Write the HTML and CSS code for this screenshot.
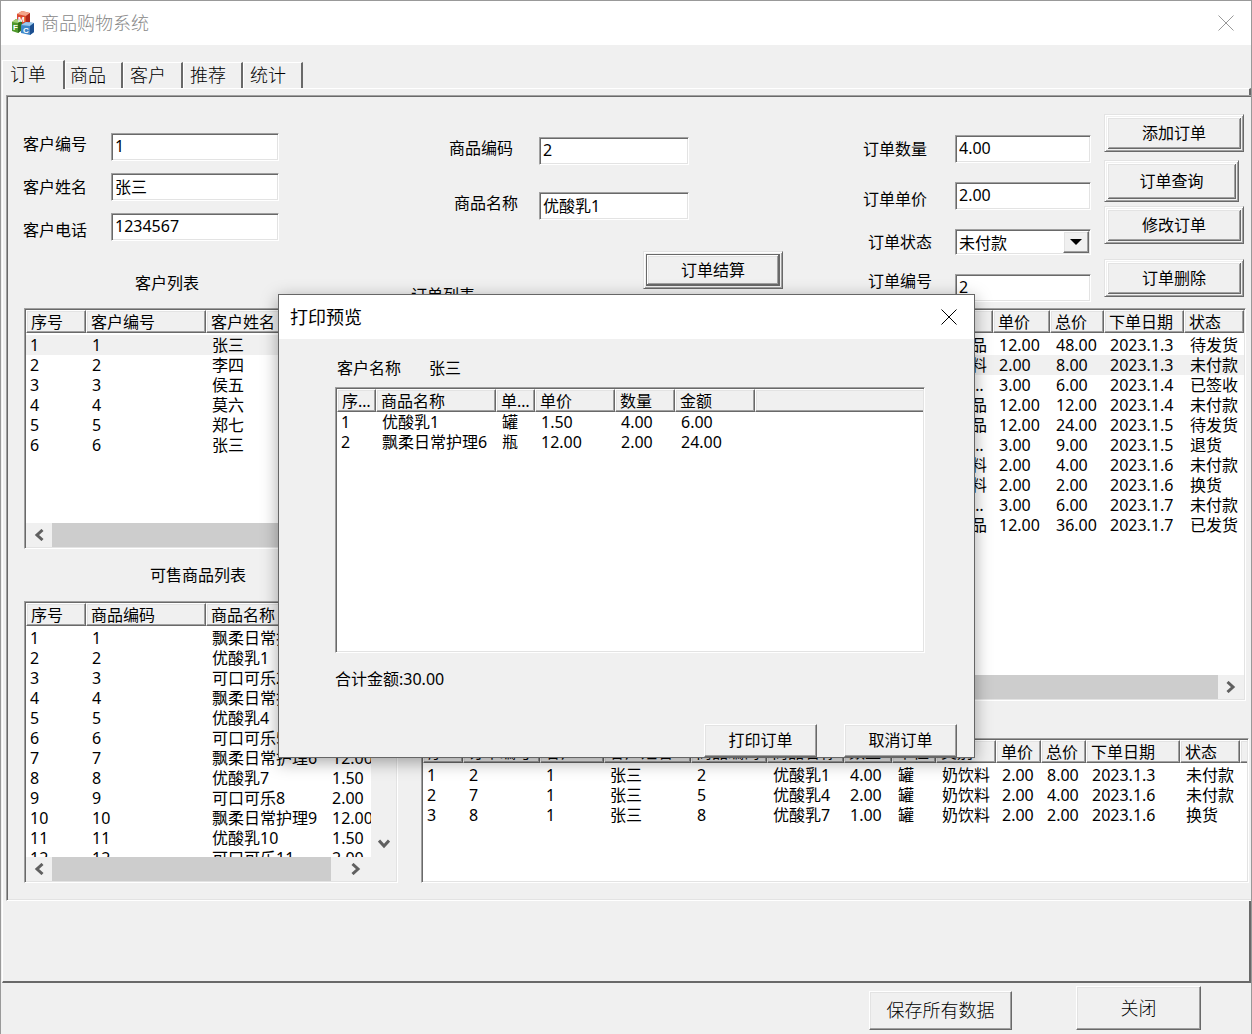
FILE: index.html
```html
<!DOCTYPE html>
<html lang="zh-CN">
<head>
<meta charset="utf-8">
<title>商品购物系统</title>
<link rel="stylesheet" href="styles.css">
</head>
<body>
<div class="window">
  <header class="titlebar">
    <svg class="logo" width="24" height="26" viewBox="0 0 24 26" aria-hidden="true">
      <path d="M6 4l5-3 8 2v8l-5 4-8-2z" fill="#dc4a2e"/>
      <path d="M6 4l5-3 8 2-4 3z" fill="#f3a58a"/>
      <path d="M15 6l4-3v9l-4 3z" fill="#b02a1c"/>
      <path d="M1 12l4-3 6 2v9l-4 3-6-2z" fill="#4f9a2c"/>
      <path d="M1 12l4-3 6 2-4 2z" fill="#a5cf78"/>
      <path d="M7 13l4-2v9l-4 3z" fill="#2f6d1c"/>
      <path d="M10 15l5-3 8 1v9l-4 3-9-2z" fill="#3f86c8"/>
      <path d="M10 15l5-3 8 1-4 3z" fill="#9cc8ec"/>
      <path d="M19 16l4-3v9l-4 3z" fill="#1d4f8f"/>
      <text x="7" y="12" class="logo-letter">M</text>
      <text x="2" y="20" class="logo-letter">F</text>
      <text x="12" y="23" class="logo-letter">C</text>
    </svg>
    <h1 class="title">商品购物系统</h1>
    <button class="close close--idle" type="button" aria-label="关闭窗口">
      <svg width="16" height="16" viewBox="0 0 16 16"><path d="M.5.5l15 15M15.5.5l-15 15" stroke="currentColor" fill="none"/></svg>
    </button>
  </header>

  <nav class="tabs" role="tablist">
    <button class="tab tab--active" role="tab" type="button" aria-selected="true">订单</button>
    <button class="tab" role="tab" type="button">商品</button>
    <button class="tab" role="tab" type="button">客户</button>
    <button class="tab" role="tab" type="button">推荐</button>
    <button class="tab" role="tab" type="button">统计</button>
  </nav>

  <div class="frame">
    <main class="page">
      <form class="form">
        <section class="group group--client">
          <div class="field"><label class="label label--top" for="cid">客户编号</label><input class="input" id="cid" value="1"></div>
          <div class="field"><label class="label" for="cname">客户姓名</label><input class="input" id="cname" value="张三"></div>
          <div class="field"><label class="label label--bottom" for="cphone">客户电话</label><input class="input" id="cphone" value="1234567"></div>
          <h2 class="caption caption--client">客户列表</h2>
        </section>
        <section class="group group--goods">
          <div class="field"><label class="label label--top" for="gid">商品编码</label><input class="input" id="gid" value="2"></div>
          <div class="field field--near"><label class="label label--top" for="gname">商品名称</label><input class="input" id="gname" value="优酸乳1"></div>
          <div class="settle">
            <h2 class="caption caption--orders">订单列表</h2>
            <button class="button button--ridge button--default" type="button">订单结算</button>
          </div>
        </section>
        <section class="group group--order">
          <div class="field"><label class="label" for="qty">订单数量</label><input class="input" id="qty" value="4.00"></div>
          <div class="field"><label class="label label--bottom" for="price">订单单价</label><input class="input" id="price" value="2.00"></div>
          <div class="field field--indent"><label class="label" for="state">订单状态</label>
            <span class="combo"><select class="combo-select" id="state"><option>未付款</option><option>待发货</option><option>已发货</option><option>已签收</option></select><span class="combo-arrow"><svg width="12" height="6" viewBox="0 0 12 6"><path d="M0 0h12L6 6z" fill="#000"/></svg></span></span>
          </div>
          <div class="field field--indent"><label class="label label--raised" for="oid">订单编号</label><input class="input" id="oid" value="2"></div>
        </section>
        <section class="actions">
          <button class="button button--ridge" type="button">添加订单</button>
          <button class="button button--ridge button--query" type="button">订单查询</button>
          <button class="button button--ridge" type="button">修改订单</button>
          <button class="button button--ridge button--delete" type="button">订单删除</button>
        </section>
      </form>

      <div class="lists">
        <div class="column">
          <div class="list list--clients">
            <div class="list-body">
              <table class="table table--gap">
                <colgroup><col class="col-60"><col class="col-120"><col></colgroup>
                <thead><tr><th>序号</th><th>客户编号</th><th>客户姓名</th></tr></thead>
                <tbody>
                  <tr class="selected"><td>1</td><td>1</td><td>张三</td></tr>
                  <tr><td>2</td><td>2</td><td>李四</td></tr>
                  <tr><td>3</td><td>3</td><td>侯五</td></tr>
                  <tr><td>4</td><td>4</td><td>莫六</td></tr>
                  <tr><td>5</td><td>5</td><td>郑七</td></tr>
                  <tr><td>6</td><td>6</td><td>张三</td></tr>
                </tbody>
              </table>
            </div>
            <div class="scroll">
              <span class="scroll-arrow"><svg width="10" height="12" viewBox="0 0 10 12"><path d="M8.500 1L3 6l5.500 5" class="chevron"/></svg></span>
              <span class="scroll-thumb"></span>
              <span class="scroll-arrow"><svg width="10" height="12" viewBox="0 0 10 12"><path d="M1.500 1L7 6l-5.500 5" class="chevron"/></svg></span>
            </div>
          </div>
          <h2 class="caption caption--stock">可售商品列表</h2>
          <div class="list list--stock">
            <div class="list-row">
              <div class="list-body">
                <table class="table table--gap table--wide">
                  <colgroup><col class="col-60"><col class="col-120"><col class="col-120"><col></colgroup>
                  <thead><tr><th>序号</th><th>商品编码</th><th>商品名称</th><th>单价</th></tr></thead>
                  <tbody>
                    <tr><td>1</td><td>1</td><td>飘柔日常护理0</td><td>12.00</td></tr>
                    <tr><td>2</td><td>2</td><td>优酸乳1</td><td>1.50</td></tr>
                    <tr><td>3</td><td>3</td><td>可口可乐2</td><td>2.00</td></tr>
                    <tr><td>4</td><td>4</td><td>飘柔日常护理3</td><td>12.00</td></tr>
                    <tr><td>5</td><td>5</td><td>优酸乳4</td><td>1.50</td></tr>
                    <tr><td>6</td><td>6</td><td>可口可乐5</td><td>2.00</td></tr>
                    <tr><td>7</td><td>7</td><td>飘柔日常护理6</td><td>12.00</td></tr>
                    <tr><td>8</td><td>8</td><td>优酸乳7</td><td>1.50</td></tr>
                    <tr><td>9</td><td>9</td><td>可口可乐8</td><td>2.00</td></tr>
                    <tr><td>10</td><td>10</td><td>飘柔日常护理9</td><td>12.00</td></tr>
                    <tr><td>11</td><td>11</td><td>优酸乳10</td><td>1.50</td></tr>
                    <tr><td>12</td><td>12</td><td>可口可乐11</td><td>2.00</td></tr>
                  </tbody>
                </table>
              </div>
              <div class="vscroll"><svg width="12" height="10" viewBox="0 0 12 10"><path d="M1 1.500L6 7l5-5.500" class="chevron"/></svg></div>
            </div>
            <div class="scroll scroll--corner">
              <span class="scroll-arrow"><svg width="10" height="12" viewBox="0 0 10 12"><path d="M8.500 1L3 6l5.500 5" class="chevron"/></svg></span>
              <span class="scroll-thumb scroll-thumb--short"></span>
              <span class="scroll-arrow"><svg width="10" height="12" viewBox="0 0 10 12"><path d="M1.500 1L7 6l-5.500 5" class="chevron"/></svg></span>
            </div>
          </div>
        </div>

        <div class="column">
          <div class="list list--orders">
            <div class="list-body">
              <table class="table table--gap">
                <colgroup><col class="col-50"><col class="col-110"><col class="col-110"><col class="col-160"><col class="col-80"><col class="col-60"><col class="col-57"><col class="col-54"><col class="col-80"><col></colgroup>
                <thead><tr><th>序号</th><th>订单编号</th><th>商品编码</th><th>商品名称</th><th>数量</th><th>类别</th><th>单价</th><th>总价</th><th>下单日期</th><th>状态</th></tr></thead>
                <tbody>
                  <tr><td>1</td><td>1</td><td>1</td><td>飘柔日常护理0</td><td>4.00</td><td>日用品</td><td>12.00</td><td>48.00</td><td>2023.1.3</td><td>待发货</td></tr>
                  <tr class="selected"><td>2</td><td>2</td><td>2</td><td>优酸乳1</td><td>4.00</td><td>奶饮料</td><td>2.00</td><td>8.00</td><td>2023.1.3</td><td>未付款</td></tr>
                  <tr><td>3</td><td>3</td><td>3</td><td>可口可乐2</td><td>2.00</td><td>碳酸饮料</td><td>3.00</td><td>6.00</td><td>2023.1.4</td><td>已签收</td></tr>
                  <tr><td>4</td><td>4</td><td>4</td><td>飘柔日常护理3</td><td>1.00</td><td>日用品</td><td>12.00</td><td>12.00</td><td>2023.1.4</td><td>未付款</td></tr>
                  <tr><td>5</td><td>5</td><td>4</td><td>飘柔日常护理3</td><td>2.00</td><td>日用品</td><td>12.00</td><td>24.00</td><td>2023.1.5</td><td>待发货</td></tr>
                  <tr><td>6</td><td>6</td><td>6</td><td>可口可乐5</td><td>3.00</td><td>碳酸饮料</td><td>3.00</td><td>9.00</td><td>2023.1.5</td><td>退货</td></tr>
                  <tr><td>7</td><td>7</td><td>5</td><td>优酸乳4</td><td>2.00</td><td>奶饮料</td><td>2.00</td><td>4.00</td><td>2023.1.6</td><td>未付款</td></tr>
                  <tr><td>8</td><td>8</td><td>8</td><td>优酸乳7</td><td>1.00</td><td>奶饮料</td><td>2.00</td><td>2.00</td><td>2023.1.6</td><td>换货</td></tr>
                  <tr><td>9</td><td>9</td><td>9</td><td>可口可乐8</td><td>2.00</td><td>碳酸饮料</td><td>3.00</td><td>6.00</td><td>2023.1.7</td><td>未付款</td></tr>
                  <tr><td>10</td><td>10</td><td>10</td><td>飘柔日常护理9</td><td>3.00</td><td>日用品</td><td>12.00</td><td>36.00</td><td>2023.1.7</td><td>已发货</td></tr>
                </tbody>
              </table>
            </div>
            <div class="scroll">
              <span class="scroll-arrow"><svg width="10" height="12" viewBox="0 0 10 12"><path d="M8.500 1L3 6l5.500 5" class="chevron"/></svg></span>
              <span class="scroll-thumb"></span>
              <span class="scroll-arrow"><svg width="10" height="12" viewBox="0 0 10 12"><path d="M1.500 1L7 6l-5.500 5" class="chevron"/></svg></span>
            </div>
          </div>
          <div class="list list--result">
            <div class="list-body">
              <table class="table table--gap">
                <colgroup><col class="col-40"><col class="col-77"><col class="col-64"><col class="col-87"><col class="col-76"><col class="col-77"><col class="col-48"><col class="col-44"><col class="col-60"><col class="col-45"><col class="col-45"><col class="col-94"><col class="col-60"><col></colgroup>
                <thead><tr><th>序号</th><th>订单编号</th><th>客户编号</th><th>客户姓名</th><th>商品编码</th><th>商品名称</th><th>数量</th><th>单位</th><th>类别</th><th>单价</th><th>总价</th><th>下单日期</th><th>状态</th><th class="rest"></th></tr></thead>
                <tbody>
                  <tr><td>1</td><td>2</td><td>1</td><td>张三</td><td>2</td><td>优酸乳1</td><td>4.00</td><td>罐</td><td>奶饮料</td><td>2.00</td><td>8.00</td><td>2023.1.3</td><td>未付款</td><td></td></tr>
                  <tr><td>2</td><td>7</td><td>1</td><td>张三</td><td>5</td><td>优酸乳4</td><td>2.00</td><td>罐</td><td>奶饮料</td><td>2.00</td><td>4.00</td><td>2023.1.6</td><td>未付款</td><td></td></tr>
                  <tr><td>3</td><td>8</td><td>1</td><td>张三</td><td>8</td><td>优酸乳7</td><td>1.00</td><td>罐</td><td>奶饮料</td><td>2.00</td><td>2.00</td><td>2023.1.6</td><td>换货</td><td></td></tr>
                </tbody>
              </table>
            </div>
          </div>
        </div>
      </div>
    </main>
  </div>

  <footer class="footer">
    <button class="button button--save" type="button">保存所有数据</button>
    <button class="button button--exit" type="button">关闭</button>
  </footer>

  <div class="dialog" role="dialog" aria-labelledby="dialog-title">
    <div class="dialog-bar">
      <h2 class="dialog-title" id="dialog-title">打印预览</h2>
      <button class="close" type="button" aria-label="关闭预览">
        <svg width="16" height="16" viewBox="0 0 16 16"><path d="M.5.5l15 15M15.5.5l-15 15" stroke="currentColor" fill="none"/></svg>
      </button>
    </div>
    <div class="dialog-body">
      <p class="customer"><span>客户名称</span><span>张三</span></p>
      <div class="list list--preview">
        <div class="list-body">
          <table class="table">
            <colgroup><col class="col-39"><col class="col-120"><col class="col-39"><col class="col-80"><col class="col-60"><col class="col-80"><col></colgroup>
            <thead><tr><th>序号</th><th>商品名称</th><th>单位</th><th>单价</th><th>数量</th><th>金额</th><th class="rest"></th></tr></thead>
            <tbody>
              <tr><td>1</td><td>优酸乳1</td><td>罐</td><td>1.50</td><td>4.00</td><td>6.00</td><td></td></tr>
              <tr><td>2</td><td>飘柔日常护理6</td><td>瓶</td><td>12.00</td><td>2.00</td><td>24.00</td><td></td></tr>
            </tbody>
          </table>
        </div>
      </div>
      <p class="total">合计金额:30.00</p>
    </div>
    <div class="dialog-actions">
      <button class="button" type="button">打印订单</button>
      <button class="button" type="button">取消订单</button>
    </div>
  </div>
</div>
</body>
</html>
```
FILE: styles.css
```css
:root {
  --face: #f0f0f0;
  --light: #e3e3e3;
  --shade: #a0a0a0;
  --dark: #696969;
}

* { box-sizing: border-box; }

body {
  margin: 0;
  background: var(--face);
  color: #000;
  font: 16px/22px "Noto Sans", "Noto Sans CJK SC", sans-serif;
}

button, input, select { font: inherit; color: inherit; }
h1, h2, p { margin: 0; font-size: 16px; font-weight: 400; }

.window {
  position: relative;
  min-height: 100vh;
  border: 1px solid #999;
  border-bottom: 0;
}

/* Title bar */
.titlebar {
  display: flex;
  align-items: center;
  height: 44px;
  padding: 0 17px 0 10px;
  background: #fff;
}
.logo-letter { font: bold 8px "Liberation Sans", sans-serif; fill: #fff; }
.title { flex: 1; margin-left: 6px; font-size: 18px; font-weight: 300; color: #888; }
.close {
  display: flex;
  padding: 0;
  border: 0;
  background: none;
}
.close--idle { color: #999; }

/* Tabs */
.tabs {
  display: flex;
  align-items: flex-end;
  padding: 15px 0 0 1px;
}
.tab {
  width: 60px;
  height: 26px;
  padding: 0 0 1px 6px;
  border: solid;
  border-width: 1px 2px 0 1px;
  border-color: #fff var(--dark) #fff #fff;
  background: var(--face);
  font-size: 18px;
  font-weight: 300;
  text-align: left;
}
.tab--active {
  width: 63px;
  height: 29px;
  margin-bottom: -1px;
  padding: 0 0 3px 7px;
  z-index: 1;
}
.tab--active + .tab { width: 58px; padding-left: 4px; }

.frame {
  margin-left: 1px;
  padding: 6px 0 80px 3px;
  border: solid;
  border-width: 1px 2px 2px 1px;
  border-color: #fff var(--dark) var(--dark) #fff;
}
.page {
  margin-right: -2px;
  padding: 1px 0 17px 1px;
  border: solid;
  border-width: 1px 0 1px 1px;
  border-color: var(--shade) #fff #fff var(--shade);
  background: var(--face);
  box-shadow: inset 1px 1px var(--dark), inset 0 -1px var(--light);
}

/* Entry form */
.form {
  display: grid;
  grid-template-columns: minmax(0, 388fr) minmax(0, 452fr) minmax(0, 241fr) minmax(0, 140fr);
  height: 211px;
  padding: 0 7px 0 15px;
}
.group { display: flex; flex-direction: column; }
.group--client { gap: 12px; padding-top: 36px; }
.group--goods { gap: 27px; padding-top: 40px; }
.group--order { gap: 19px; padding-top: 38px; }

.field { display: flex; align-items: center; }
.label { flex: none; }
.label--top { align-self: flex-start; }
.label--bottom { align-self: flex-end; }
.label--raised { align-self: flex-start; line-height: 14px; }

.group--client .label { width: 88px; }
.group--client .input { width: 168px; }
.group--goods .field { width: 278px; justify-content: flex-end; gap: 26px; }
.group--goods .field--near { gap: 21px; }
.group--goods .input { width: 150px; }
.group--order .label { width: 92px; }
.group--order .field--indent { padding-left: 5px; }
.group--order .field--indent .label { width: 87px; }
.group--order .input, .combo { width: 136px; }

.input, .combo {
  height: 28px;
  padding: 1px;
  border: 1px solid;
  border-color: var(--shade) #fff #fff var(--shade);
  background: #fff;
  box-shadow: inset 1px 1px var(--dark), inset -1px -1px var(--light);
}
.input { padding: 0 1px 2px 3px; outline: 0; }
.combo { display: flex; height: 26px; }
.combo-select {
  flex: 1;
  min-width: 0;
  padding: 1px 0 0 2px;
  border: 0;
  background: none;
  line-height: 20px;
  appearance: none;
}
.combo-arrow {
  display: flex;
  align-items: center;
  justify-content: center;
  width: 26px;
}
.combo-arrow, .button {
  border: 1px solid;
  border-color: #fff var(--dark) var(--dark) #fff;
  background: var(--face);
  box-shadow: inset -1px -1px var(--shade), inset 1px 1px var(--light);
}

.caption--client { margin: 19px 0 0 112px; }
.caption--stock { margin: 15px 0 15px 126px; }
.caption--orders { align-self: flex-end; }
.settle {
  display: flex;
  justify-content: space-between;
  width: 372px;
  height: 55px;
  margin-top: 4px;
}

/* Buttons */
.button { padding: 0 0 1px; }
.button--ridge {
  height: 38px;
  border-color: var(--light) var(--dark) var(--dark) var(--light);
  box-shadow:
    inset 1px 1px #fff, inset -1px -1px var(--shade),
    inset 2px 2px var(--face), inset -2px -2px var(--face),
    inset 3px 3px #fff, inset -3px -3px var(--dark),
    inset 4px 4px var(--light), inset -4px -4px var(--shade);
}
.button--default {
  width: 140px;
  box-shadow:
    inset 1px 1px #fff, inset -1px -1px var(--shade),
    inset 2px 2px var(--face), inset -2px -2px var(--face),
    inset 3px 3px var(--dark), inset -4px -4px var(--dark),
    inset 4px 4px #fff, inset -5px -5px var(--shade),
    inset 5px 5px var(--light);
}
.actions {
  display: flex;
  flex-direction: column;
  gap: 4px;
  padding-top: 17px;
}
.button--query { height: 42px; margin: 4px 5px 0 0; }
.button--delete { margin-top: 11px; }

/* List views */
.lists {
  display: grid;
  grid-template-columns: 374px minmax(0, 1fr);
  gap: 23px;
  padding: 0 2px 0 16px;
}
.column { display: flex; flex-direction: column; }
.list {
  display: flex;
  flex-direction: column;
  padding: 1px;
  border: 1px solid;
  border-color: var(--shade) #fff #fff var(--shade);
  background: #fff;
  box-shadow: inset 1px 1px var(--dark), inset -1px -1px var(--light);
}
.list--clients { height: 241px; }
.list--stock { height: 282px; }
.list--orders { height: 393px; margin: 0 3px 37px 0; }
.list--result { height: 145px; }
.list--preview { height: 266px; }
.list-row { display: flex; flex: 1; min-height: 0; }
.list-body { flex: 1; min-height: 0; overflow: hidden; }

.table {
  width: 100%;
  border-spacing: 0;
  table-layout: fixed;
  line-height: 20px;
}
.table--wide { width: 380px; }
.table--gap tbody::before { content: ""; display: table-row; height: 2px; }
.table th, .table td {
  padding: 0 3px 0 6px;
  overflow: hidden;
  text-align: left;
  text-overflow: ellipsis;
  white-space: nowrap;
}
.table td { height: 20px; }
.table td:first-child { padding-left: 4px; }
.table th {
  height: 23px;
  padding-left: 4px;
  border: 1px solid;
  border-color: #fff var(--dark) var(--dark) #fff;
  background: var(--face);
  box-shadow: inset -1px -1px var(--shade), inset 1px 1px var(--light);
  font-weight: 400;
}
.table .rest {
  border-right: 0;
  box-shadow: inset 0 -1px var(--shade), inset 1px 1px var(--light);
}
.selected td { background: var(--face); }

.col-39 { width: 39px; }
.col-40 { width: 40px; }
.col-44 { width: 44px; }
.col-45 { width: 45px; }
.col-48 { width: 48px; }
.col-50 { width: 50px; }
.col-54 { width: 54px; }
.col-57 { width: 57px; }
.col-60 { width: 60px; }
.col-64 { width: 64px; }
.col-76 { width: 76px; }
.col-77 { width: 77px; }
.col-80 { width: 80px; }
.col-87 { width: 87px; }
.col-94 { width: 94px; }
.col-110 { width: 110px; }
.col-120 { width: 120px; }
.col-160 { width: 160px; }

.scroll { display: flex; height: 24px; background: var(--face); }
.scroll--corner { padding-right: 27px; }
.scroll-arrow {
  display: flex;
  align-items: center;
  justify-content: center;
  width: 26px;
}
.scroll-thumb { flex: 1; background: #cdcdcd; }
.scroll-thumb--short { margin-right: 12px; }
.vscroll {
  display: flex;
  align-items: flex-end;
  justify-content: center;
  width: 25px;
  padding-bottom: 8px;
  background: var(--face);
}
.chevron { fill: none; stroke: #606060; stroke-width: 3; }

/* Footer */
.footer {
  display: flex;
  align-items: flex-end;
  justify-content: flex-end;
  gap: 64px;
  padding: 3px 50px 4px 0;
}
.footer .button { font-size: 18px; font-weight: 300; }
.button--save { width: 143px; height: 39px; }
.button--exit { width: 125px; height: 44px; }

/* Print preview window */
.dialog {
  position: absolute;
  top: 293px;
  left: 277px;
  z-index: 2;
  width: 697px;
  border: 1px solid #666;
  background: var(--face);
  box-shadow: 0 4px 16px rgba(0, 0, 0, 0.35);
}
.dialog-bar {
  display: flex;
  align-items: center;
  justify-content: space-between;
  height: 44px;
  padding: 0 17px 0 11px;
  background: #fff;
}
.dialog-title { font-size: 18px; }
.dialog-body { padding: 18px 49px 0 56px; }
.customer { display: flex; gap: 28px; margin-bottom: 8px; padding-left: 2px; }
.total { margin-top: 15px; }
.dialog-actions {
  display: flex;
  justify-content: flex-end;
  gap: 27px;
  padding: 34px 17px 0 0;
}
.dialog-actions .button { width: 113px; height: 33px; }
```
